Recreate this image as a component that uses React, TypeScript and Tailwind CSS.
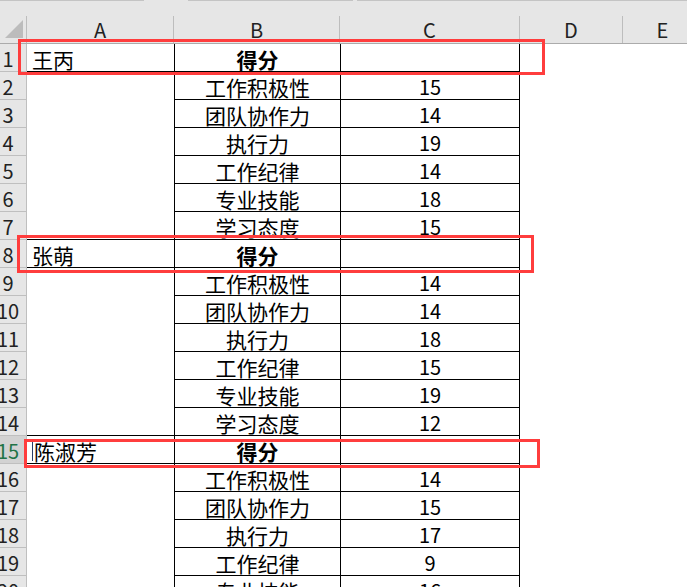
import React from 'react';

type Row = { n: number; a?: string; b: string; c?: string; head?: boolean };

const rows: Row[] = [
  { n: 1, a: '王丙', b: '得分', head: true },
  { n: 2, b: '工作积极性', c: '15' },
  { n: 3, b: '团队协作力', c: '14' },
  { n: 4, b: '执行力', c: '19' },
  { n: 5, b: '工作纪律', c: '14' },
  { n: 6, b: '专业技能', c: '18' },
  { n: 7, b: '学习态度', c: '15' },
  { n: 8, a: '张萌', b: '得分', head: true },
  { n: 9, b: '工作积极性', c: '14' },
  { n: 10, b: '团队协作力', c: '14' },
  { n: 11, b: '执行力', c: '18' },
  { n: 12, b: '工作纪律', c: '15' },
  { n: 13, b: '专业技能', c: '19' },
  { n: 14, b: '学习态度', c: '12' },
  { n: 15, a: '陈淑芳', b: '得分', head: true },
  { n: 16, b: '工作积极性', c: '14' },
  { n: 17, b: '团队协作力', c: '15' },
  { n: 18, b: '执行力', c: '17' },
  { n: 19, b: '工作纪律', c: '9' },
  { n: 20, b: '专业技能', c: '16' },
];

const cols = [
  { k: 'A', w: 'w-[147px]' },
  { k: 'B', w: 'w-[166px]' },
  { k: 'C', w: 'w-[180px]' },
  { k: 'D', w: 'w-[103px]' },
  { k: 'E', w: 'w-[80px]' },
];

// rows whose A cell carries a bottom line (name rows and the row above one)
const lineUnderA = new Set([1, 7, 8, 14, 15]);

export default function App() {
  return (
    <div className="relative w-[687px] h-[587px] overflow-hidden bg-white text-black font-['Noto_Sans_CJK_SC','Noto_Sans',sans-serif]">
      {/* strip above headers */}
      <div className="h-[16px] bg-[#e6e6e6] flex items-start">
        <div className="w-[144px] h-[1px] bg-[#c4c4c4]" />
        <div className="w-[44px]" />
        <div className="w-[165px] h-[1px] bg-[#c4c4c4]" />
        <div className="w-[4px]" />
        <div className="flex-1 h-[1px] bg-[#c4c4c4]" />
      </div>

      {/* column headers */}
      <div className="flex h-[28px] bg-[#e6e6e6] border-b border-[#ababab]">
        <div className="relative w-[27px] shrink-0 border-r border-[#bdbdbd]">
          <svg className="absolute left-[5px] top-[4px]" width="18" height="18" viewBox="0 0 18 18">
            <polygon points="0,18 18,18 18,0" fill="#bcbcbc" />
          </svg>
        </div>
        {cols.map((c) => (
          <div
            key={c.k}
            className={`${c.w} shrink-0 flex items-center justify-center border-r border-[#bdbdbd] text-[20px] leading-[28px] pt-[1px] text-[#222]`}
          >
            {c.k}
          </div>
        ))}
      </div>

      {/* body rows */}
      {rows.map((r) => {
        const active = r.n === 15;
        return (
          <div key={r.n} className="flex h-[28px] text-[20px] leading-[28px]">
            <div
              className={`w-[27px] shrink-0 overflow-hidden border-r border-b border-[#bfbfbf] ${
                active ? 'bg-[#d2d2d2] text-[#217346]' : 'bg-[#e6e6e6] text-[#222]'
              }`}
            >
              <div className="w-[16px] h-full flex justify-center whitespace-nowrap pt-[1px]">{r.n}</div>
            </div>
            <div
              className={`w-[147px] shrink-0 flex items-center pl-[5px] pt-[2px] text-[21px] ${
                lineUnderA.has(r.n) ? 'border-b border-black' : ''
              }`}
            >
              {active && <span className="inline-block w-[1px] h-[20px] bg-[#2a3d66] mr-[1px]" />}
              {r.a}
            </div>
            <div
              className={`w-[166px] shrink-0 flex items-center justify-center border-l border-b border-black pt-[2px] text-[21px] ${
                r.head ? 'font-bold' : ''
              }`}
            >
              {r.b}
            </div>
            <div className="w-[180px] shrink-0 flex items-center justify-center border-l border-r border-b border-black pt-[2px]">
              {r.c}
            </div>
            <div className="flex-1" />
          </div>
        );
      })}

      {/* annotation boxes */}
      <div className="absolute left-[18px] top-[39px] w-[527px] h-[36px] border-[3px] border-[#ff3d3d]" />
      <div className="absolute left-[17px] top-[235px] w-[517px] h-[38px] border-[3px] border-[#ff3d3d]" />
      <div className="absolute left-[24px] top-[439px] w-[516px] h-[29px] border-[3px] border-[#ff3d3d]" />
    </div>
  );
}
